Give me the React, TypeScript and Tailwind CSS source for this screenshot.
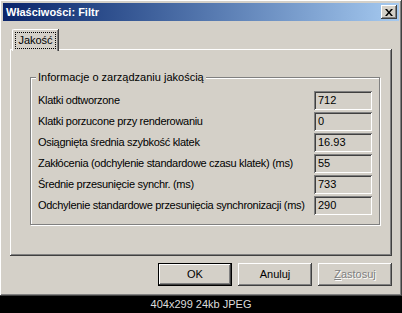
import React from 'react';

const rows = [
  { label: 'Klatki odtworzone', value: '712' },
  { label: 'Klatki porzucone przy renderowaniu', value: '0' },
  { label: 'Osiągnięta średnia szybkość klatek', value: '16.93' },
  { label: 'Zakłócenia (odchylenie standardowe czasu klatek) (ms)', value: '55' },
  { label: 'Średnie przesunięcie synchr. (ms)', value: '733' },
  { label: 'Odchylenie standardowe przesunięcia synchronizacji (ms)', value: '290' },
];

const raised =
  'shadow-[inset_-1px_-1px_#404040,inset_1px_1px_#ffffff,inset_-2px_-2px_#808080,inset_2px_2px_#d4d0c8]';
const sunken =
  'shadow-[inset_1px_1px_#808080,inset_-1px_-1px_#ffffff,inset_2px_2px_#404040,inset_-2px_-2px_#d4d0c8]';

const font = { fontFamily: '"Liberation Sans", Arial, sans-serif' };

export default function App() {
  return (
    <div className="w-[402px] h-[313px] bg-black flex flex-col overflow-hidden" style={font}>
      {/* okno dialogu */}
      <div className={`h-[296px] bg-[#d4d0c8] flex flex-col p-[3px] ${raised}`}>
        {/* pasek tytułu */}
        <div className="h-[18px] flex items-center justify-between pl-[3px] pr-[2px] bg-gradient-to-r from-[#0a246a] to-[#a6caf0]">
          <span className="text-white text-[11px] font-bold leading-none">Właściwości: Filtr</span>
          <div className={`w-[16px] h-[14px] bg-[#d4d0c8] flex items-center justify-center ${raised}`}>
            <svg width="8" height="7" viewBox="0 0 8 7">
              <path d="M0 0h2l2 2.5L6 0h2L5 3.5 8 7H6L4 4.5 2 7H0l3-3.5z" fill="#000" />
            </svg>
          </div>
        </div>

        {/* zakładki */}
        <div className="flex flex-col px-[7px] mt-[8px]">
          <div className="flex pl-[2px] relative z-10">
            <div className="h-[22px] w-[46px] bg-[#d4d0c8] border-l border-t border-white rounded-tl-[2px] shadow-[inset_-1px_0_#808080,1px_0_#404040] flex items-center justify-center">
              <span className="text-[11px] leading-none px-[2px] py-[2px] outline outline-1 outline-dotted outline-black">
                Jakość
              </span>
            </div>
          </div>
          <div className={`h-[207px] -mt-[2px] flex flex-col pt-[28px] pl-[20px] pr-[12px] ${raised}`}>
            {/* ramka grupy */}
            <div className="relative h-[148px] border border-[#808080] shadow-[inset_1px_1px_#ffffff,1px_1px_#ffffff] pt-[12px] px-[7px]">
              <span className="absolute -top-[7px] left-[5px] bg-[#d4d0c8] px-[2px] text-[11px] leading-[13px] text-black">
                Informacje o zarządzaniu jakością
              </span>
              <div className="flex flex-col">
                {rows.map((r) => (
                  <div key={r.label} className="h-[21px] flex items-center justify-between">
                    <span className="text-[11px] text-black whitespace-nowrap tracking-[-0.3px]">{r.label}</span>
                    <div className={`w-[58px] h-[19px] flex items-center pl-[4px] text-[11px] text-black ${sunken}`}>
                      {r.value}
                    </div>
                  </div>
                ))}
              </div>
            </div>
          </div>
        </div>

        {/* przyciski */}
        <div className="flex justify-end gap-[6px] mt-[7px] pr-[7px]">
          <button className={`w-[74px] h-[23px] border border-black text-[11px] text-black flex items-center justify-center bg-[#d4d0c8] ${raised}`}>
            OK
          </button>
          <button className={`w-[74px] h-[23px] text-[11px] text-black flex items-center justify-center bg-[#d4d0c8] ${raised}`}>
            Anuluj
          </button>
          <button className={`w-[74px] h-[23px] text-[11px] text-[#808080] flex items-center justify-center bg-[#d4d0c8] [text-shadow:1px_1px_#ffffff] ${raised}`}>
            <span><span className="underline">Z</span>astosuj</span>
          </button>
        </div>
      </div>

      {/* podpis */}
      <div className="flex-1 flex items-center justify-center">
        <span className="text-[#dcdcdc] text-[11px]">404x299 24kb JPEG</span>
      </div>
    </div>
  );
}
